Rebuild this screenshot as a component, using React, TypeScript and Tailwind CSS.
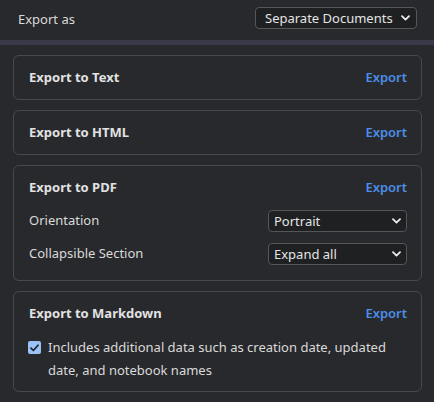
import React, { useState } from 'react';

const Chevron: React.FC = () => (
  <svg width="9" height="6" viewBox="0 0 9 6" fill="none">
    <path d="M1 1.2 L4.5 4.6 L8 1.2" stroke="#ececec" strokeWidth="1.8" strokeLinecap="round" strokeLinejoin="round" />
  </svg>
);

const FakeSelect: React.FC<{ value: string; className: string }> = ({ value, className }) => (
  <div
    className={`flex items-center justify-between h-[22px] rounded-[4px] border border-[#55565a] bg-[#1f2022] text-[#e4e4e4] ${className}`}
  >
    <span className="leading-[20px]">{value}</span>
    <Chevron />
  </div>
);

const Card: React.FC<{ title: string; className?: string; children?: React.ReactNode }> = ({ title, className, children }) => (
  <div className={`rounded-[6px] border border-[#48494c] pl-[15px] pr-[14px] pt-[13px] ${className ?? 'pb-[13px]'}`}>
    <div className="flex items-center justify-between h-[17px]">
      <span className="font-bold text-[#e2e2e2]">{title}</span>
      <button className="font-semibold text-[#4c8ee9]">Export</button>
    </div>
    {children}
  </div>
);

const App: React.FC = () => {
  const [withMeta, setWithMeta] = useState(true);

  return (
    <div
      className="w-[434px] h-[402px] bg-[#28292c] text-[13px] text-[#dadada] overflow-hidden"
      style={{ fontFamily: '"Noto Sans", "Open Sans", sans-serif' }}
    >
      {/* header */}
      <div className="h-10 flex items-center justify-between pl-[18px] pr-[17px]">
        <span className="-mt-[1px]">Export as</span>
        <FakeSelect value="Separate Documents" className="w-[162px] pl-[9px] pr-[6px] -mt-[4px]" />
      </div>
      <div className="h-[5px] bg-[#383a4a]" />

      <div className="pl-[13px] pr-[12px] pt-[10px] flex flex-col gap-[10px]">
        <Card title="Export to Text" />
        <Card title="Export to HTML" />

        <Card title="Export to PDF" className="pb-[15px]">
          <div className="flex items-center justify-between mt-[14px]">
            <span>Orientation</span>
            <FakeSelect value="Portrait" className="w-[139px] pl-[5px] pr-[5px]" />
          </div>
          <div className="flex items-center justify-between mt-[11px]">
            <span>Collapsible Section</span>
            <FakeSelect value="Expand all" className="w-[139px] pl-[5px] pr-[5px]" />
          </div>
        </Card>

        <Card title="Export to Markdown" className="pb-[9px]">
          <label className="flex items-start gap-[7px] mt-[14px] leading-[23px]">
            <span
              onClick={() => setWithMeta(!withMeta)}
              className="mt-[5px] -ml-[1px] shrink-0 w-[13px] h-[13px] rounded-[2px] bg-[#99c3f7] flex items-center justify-center"
            >
              {withMeta && (
                <svg width="9" height="8" viewBox="0 0 9 8" fill="none">
                  <path d="M1 4.2 L3.4 6.5 L8 1.2" stroke="#202124" strokeWidth="1.7" strokeLinecap="round" strokeLinejoin="round" />
                </svg>
              )}
            </span>
            <span>Includes additional data such as creation date, updated date, and notebook names</span>
          </label>
        </Card>
      </div>
    </div>
  );
};

export default App;
